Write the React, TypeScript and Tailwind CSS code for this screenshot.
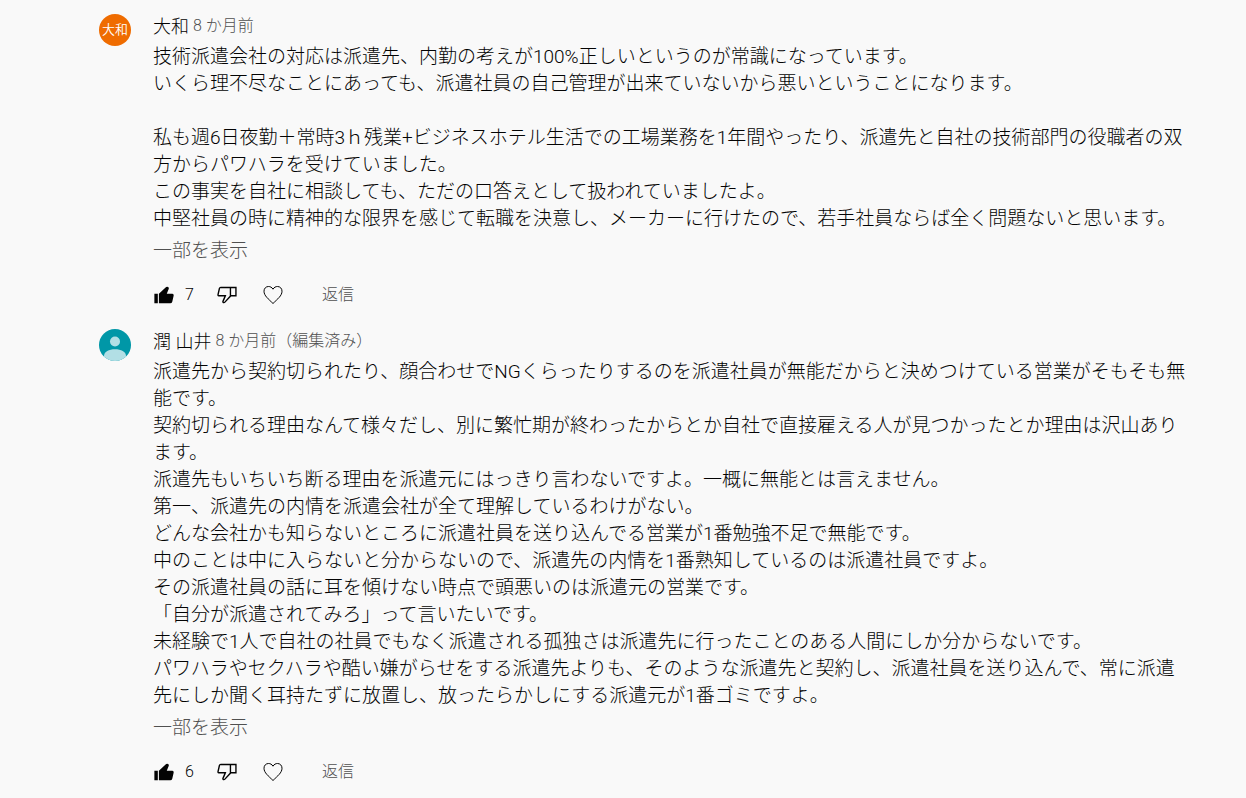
import { useState, type ReactNode } from 'react';

type Comment = {
  id: string;
  author: string;
  time: string;
  likes: number;
  avatar: ReactNode;
  body: string;
};

const comments: Comment[] = [
  {
    id: 'yamato',
    author: '大和',
    time: '8 か月前',
    likes: 7,
    avatar: (
      <div className="flex size-8 items-center justify-center rounded-full bg-[#ef6c00] text-[13px] font-[350] text-white">
        大和
      </div>
    ),
    body: `技術派遣会社の対応は派遣先、内勤の考えが100%正しいというのが常識になっています。
いくら理不尽なことにあっても、派遣社員の自己管理が出来ていないから悪いということになります。

私も週6日夜勤＋常時3ｈ残業+ビジネスホテル生活での工場業務を1年間やったり、派遣先と自社の技術部門の役職者の双方からパワハラを受けていました。
この事実を自社に相談しても、ただの口答えとして扱われていましたよ。
中堅社員の時に精神的な限界を感じて転職を決意し、メーカーに行けたので、若手社員ならば全く問題ないと思います。`,
  },
  {
    id: 'yamai',
    author: '潤 山井',
    time: '8 か月前（編集済み）',
    likes: 6,
    avatar: (
      <svg className="size-8 rounded-full" viewBox="0 0 32 32" aria-hidden="true">
        <rect width="32" height="32" fill="#0097a7" />
        <circle cx="16" cy="12.500" r="5" fill="#b2dfe5" />
        <path d="M5 27c0-4.500 5-6.800 11-6.800s11 2.300 11 6.800v5H5z" fill="#b2dfe5" />
      </svg>
    ),
    body: `派遣先から契約切られたり、顔合わせでNGくらったりするのを派遣社員が無能だからと決めつけている営業がそもそも無能です。
契約切られる理由なんて様々だし、別に繁忙期が終わったからとか自社で直接雇える人が見つかったとか理由は沢山あります。
派遣先もいちいち断る理由を派遣元にはっきり言わないですよ。一概に無能とは言えません。
第一、派遣先の内情を派遣会社が全て理解しているわけがない。
どんな会社かも知らないところに派遣社員を送り込んでる営業が1番勉強不足で無能です。
中のことは中に入らないと分からないので、派遣先の内情を1番熟知しているのは派遣社員ですよ。
その派遣社員の話に耳を傾けない時点で頭悪いのは派遣元の営業です。
「自分が派遣されてみろ」って言いたいです。
未経験で1人で自社の社員でもなく派遣される孤独さは派遣先に行ったことのある人間にしか分からないです。
パワハラやセクハラや酷い嫌がらせをする派遣先よりも、そのような派遣先と契約し、派遣社員を送り込んで、常に派遣先にしか聞く耳持たずに放置し、放ったらかしにする派遣元が1番ゴミですよ。`,
  },
];

function ThumbUpIcon() {
  return (
    <svg className="size-[22px]" viewBox="0 0 16 16" fill="currentColor" aria-hidden="true">
      <path d="M1 7h2.500v7H1zM4.300 7l4.860-4.540A1.490 1.490 0 0 1 10.240 2a1.170 1.170 0 0 1 1.240 1.460L10 7h4c1 0 1.120.76 1 1.630l-1 4.240A1.540 1.540 0 0 1 12.420 14H4.300z" />
    </svg>
  );
}

function ThumbDownIcon() {
  return (
    <svg className="size-[22px] rotate-180" viewBox="0 0 16 16" fill="currentColor" aria-hidden="true">
      <path d="M12.42,14A1.54,1.54,0,0,0,14,12.87l1-4.24C15.12,7.76,15,7,14,7H10l1.48-3.54A1.17,1.17,0,0,0,10.24,2a1.49,1.49,0,0,0-1.08.46L5,7H1v7ZM9.89,3.14A.48.48,0,0,1,10.24,3a.29.29,0,0,1,.23.09S9,6.61,9,6.61L8.46,8H14c0,.08-1,4.65-1,4.65a.58.58,0,0,1-.58.35H6V7.39ZM2,8H5v5H2Z" />
    </svg>
  );
}

function HeartIcon() {
  return (
    <svg
      className="size-[22px]"
      viewBox="0 0 22 22"
      fill="none"
      stroke="currentColor"
      strokeWidth="1"
      strokeLinejoin="round"
      aria-hidden="true"
    >
      <path d="M11 5.200C9.900 3.300 8.200 2.500 6.500 2.500C3.900 2.500 2 4.500 2 7.200C2 11.800 6.500 15 11 19.500C15.500 15 20 11.800 20 7.200C20 4.500 18.100 2.500 15.500 2.500C13.800 2.500 12.100 3.300 11 5.200Z" />
    </svg>
  );
}

function CommentItem({ comment }: { comment: Comment }) {
  const [expanded, setExpanded] = useState(true);

  return (
    <article className="flex gap-[22px]">
      <div className="shrink-0 pt-1">{comment.avatar}</div>
      <div className="min-w-0 flex-1">
        <header className="flex h-8 items-center gap-1">
          <a href="#" className="text-[18px]">
            {comment.author}
          </a>
          <a href="#" className="text-base text-[#505050]">
            {comment.time}
          </a>
        </header>
        <p className={`mt-px text-[19px] leading-[27px] whitespace-pre-line ${expanded ? '' : 'line-clamp-4'}`}>
          {comment.body}
        </p>
        <button
          type="button"
          className="mt-[5px] block text-[19px] leading-[27px] text-[#505050]"
          onClick={() => setExpanded(!expanded)}
        >
          {expanded ? '一部を表示' : '続きを読む'}
        </button>
        <div className="mt-[13px] flex h-9 items-center">
          <button type="button" aria-label="高く評価">
            <ThumbUpIcon />
          </button>
          <span className="w-[41px] pl-[10px] text-base">{comment.likes}</span>
          <button type="button" aria-label="低く評価">
            <ThumbDownIcon />
          </button>
          <button type="button" aria-label="ハート" className="ml-6">
            <HeartIcon />
          </button>
          <button type="button" className="ml-[38px] text-base text-[#505050]">
            返信
          </button>
        </div>
      </div>
    </article>
  );
}

export default function App() {
  return (
    <main
      lang="ja"
      className="flex min-h-screen flex-col gap-3 bg-[#f9f9f9] pt-[10px] pr-[57px] pl-[99px] font-['Roboto','Noto_Sans_CJK_JP',sans-serif] font-light text-[#030303]"
    >
      {comments.map((comment) => (
        <CommentItem key={comment.id} comment={comment} />
      ))}
    </main>
  );
}
